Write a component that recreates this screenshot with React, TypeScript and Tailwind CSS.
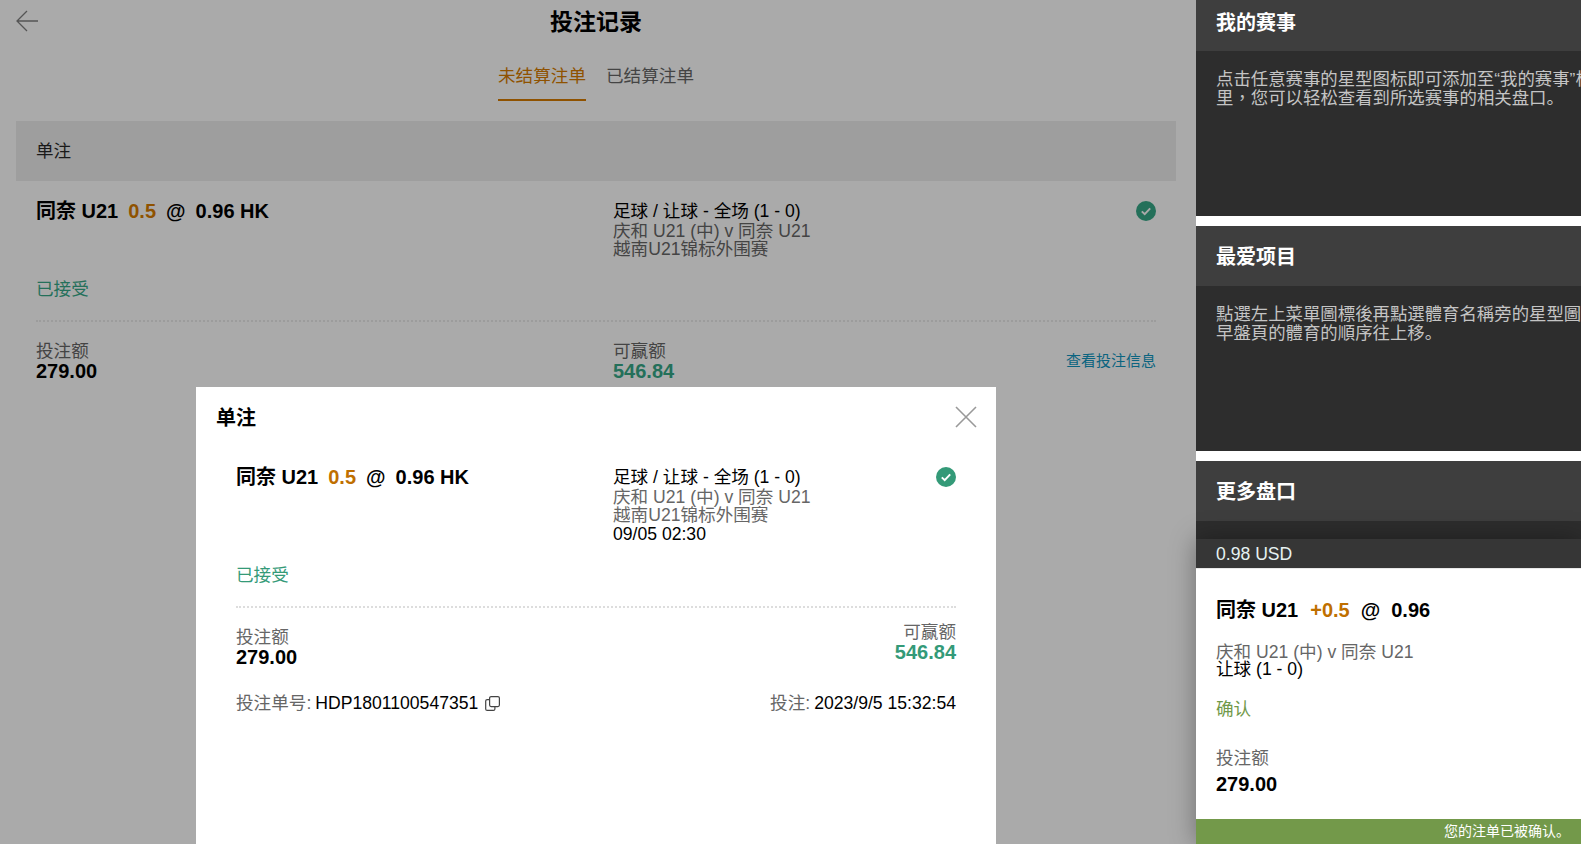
import React from 'react';

const CheckBadge = ({ color }: { color: string }) => (
  <svg width="20" height="20" viewBox="0 0 20 20" className="shrink-0">
    <circle cx="10" cy="10" r="10" fill={color} />
    <path d="M5.8 10.4l2.9 2.8 5.5-5.8" fill="none" stroke={color === '#349a78' ? '#ffffff' : '#a9a9a9'} strokeWidth="2" />
  </svg>
);

const BetTitle = ({ name, line, price, orange, wide }: { name: string; line: string; price: string; orange: string; wide?: boolean }) => (
  <div className={wide ? 'flex gap-[11px] text-[20px] leading-[20px] font-bold text-black whitespace-nowrap' : 'flex gap-[10px] text-[20px] leading-[20px] font-bold text-black whitespace-nowrap'}>
    <span className={wide ? 'mr-px' : ''}>{name}</span>
    <span style={{ color: orange }}>{line}</span>
    <span>@</span>
    <span>{price}</span>
  </div>
);

const Market = ({ main, sub }: { main: string; sub: string }) => (
  <div className="text-[17.6px] leading-[18px]">
    <div className="text-black leading-[20px] mb-px">足球 / 让球 - 全场 (1 - 0)</div>
    <div style={{ color: main }}>庆和 U21 (中) v 同奈 U21</div>
    <div style={{ color: main }}>越南U21锦标外围赛</div>
    {sub && <div className="text-black leading-[20px]">{sub}</div>}
  </div>
);

export default function App() {
  return (
    <div className="relative flex h-[844px] w-[1581px] overflow-hidden bg-white font-['Liberation_Sans','Noto_Sans_CJK_SC',sans-serif]">
      {/* Dimmed bet history */}
      <div className="w-[1196px] shrink-0 bg-[#aaaaaa] px-4">
        <div className="relative h-[42px] w-[1160px] text-center text-[23px] leading-[44px] font-bold text-black">
          <svg width="24" height="24" viewBox="0 0 24 24" className="absolute left-0 top-[9px]" fill="none" stroke="#555555" strokeWidth="1.3">
            <path d="M22 12H1M11 2L1 12l10 10" />
          </svg>
          投注记录
        </div>
        <div className="mt-2 flex w-[1160px] justify-center gap-5 text-[17.6px] leading-[52px]">
          <div className="h-[51px] border-b-2 border-[#8f5200] text-[#8f5200]">未结算注单</div>
          <div className="h-[51px] text-[#444444]">已结算注单</div>
        </div>
        <div className="mt-5 h-[60px] w-[1160px] bg-[#9e9e9e] pl-5 text-[17.6px] leading-[60px] text-[#1a1a1a]">单注</div>
        <div className="w-[1160px] px-5 pt-5">
          <div className="flex h-[77px]">
            <div className="w-[577px] shrink-0">
              <BetTitle name="同奈 U21" line="0.5" price="0.96 HK" orange="#8f5200" />
            </div>
            <div className="flex-1">
              <Market main="#444444" sub="" />
            </div>
            <CheckBadge color="#24705a" />
          </div>
          <div className="text-[17.6px] leading-[22px] text-[#24705a]">已接受</div>
          <div className="mt-[20px] border-t-2 border-dotted border-[#9c9c9c]" />
          <div className="flex pt-[19px]">
            <div className="w-[577px] shrink-0">
              <div className="text-[17.6px] leading-[20px] text-[#444444]">投注额</div>
              <div className="text-[20px] leading-[20px] font-bold text-black">279.00</div>
            </div>
            <div className="flex-1">
              <div className="text-[17.6px] leading-[20px] text-[#444444]">可赢额</div>
              <div className="text-[20px] leading-[20px] font-bold text-[#24705a]">546.84</div>
            </div>
            <div className="mt-[10px] text-[15px] leading-[20px] text-[#0b6480]">查看投注信息</div>
          </div>
        </div>
      </div>

      {/* Bet detail modal */}
      <div className="absolute bottom-0 left-[196px] top-[387px] w-[800px] bg-white">
        <div className="relative h-[60px] pl-5 text-[20px] leading-[62px] font-bold text-black">
          单注
          <svg width="22" height="22" viewBox="0 0 22 22" className="absolute right-[19px] top-[19px]" stroke="#999999" strokeWidth="1.6">
            <path d="M1 1l20 20M21 1L1 21" />
          </svg>
        </div>
        <div className="px-10 pt-5">
          <div className="flex h-[97px]">
            <div className="w-[377px] shrink-0">
              <BetTitle name="同奈 U21" line="0.5" price="0.96 HK" orange="#bf6f00" />
            </div>
            <div className="flex-1">
              <Market main="#666666" sub="09/05 02:30" />
            </div>
            <CheckBadge color="#349a78" />
          </div>
          <div className="text-[17.6px] leading-[22px] text-[#349a78]">已接受</div>
          <div className="mt-[20px] border-t-2 border-dotted border-[#dddddd]" />
          <div className="flex items-start justify-between">
            <div className="pt-[19px]">
              <div className="text-[17.6px] leading-[20px] text-[#666666]">投注额</div>
              <div className="text-[20px] leading-[20px] font-bold text-black">279.00</div>
            </div>
            <div className="pt-[14px] text-right">
              <div className="text-[17.6px] leading-[20px] text-[#666666]">可赢额</div>
              <div className="text-[20px] leading-[20px] font-bold text-[#349a78]">546.84</div>
            </div>
          </div>
          <div className="mt-[26px] flex justify-between text-[17.6px] leading-[20px] text-black">
            <div className="flex items-center">
              <span className="text-[#666666]">投注单号:</span>
              <span className="ml-1">HDP1801100547351</span>
              <svg width="15" height="16" viewBox="0 0 15 16" fill="none" stroke="#444444" strokeWidth="1.2" className="ml-[7px]">
                <rect x="4.6" y="1.6" width="9.8" height="10" rx="1.5" />
                <path d="M4.6 4.6H2.2A1.5 1.5 0 0 0 .7 6.1v7.8a1.5 1.5 0 0 0 1.5 1.5h6.2a1.5 1.5 0 0 0 1.5-1.5v-2.2" />
              </svg>
            </div>
            <div>
              <span className="text-[#666666]">投注:</span>
              <span className="ml-1">2023/9/5 15:32:54</span>
            </div>
          </div>
        </div>
      </div>

      {/* Right column */}
      <div className="w-[385px] shrink-0 overflow-hidden bg-white">
        <div className="mb-[10px]">
          <div className="h-[51px] bg-[#3e3e3e] pl-5 text-[20px] leading-[46px] font-bold text-white">我的赛事</div>
          <div className="h-[165px] bg-[#2d2d2d] pl-5 pt-[19px] text-[17.4px] leading-[18px] text-[#c4c4c4] whitespace-nowrap">
            <div className="h-[18px]">点击任意赛事的星型图标即可添加至“我的赛事”栏目</div>
            <div className="h-[18px]">里<span lang="zh-Hant" className="font-['Noto_Sans_CJK_TC']">，</span>您可以轻松查看到所选赛事的相关盘口。</div>
          </div>
        </div>
        <div className="mb-[10px]">
          <div className="h-[60px] bg-[#3e3e3e] pl-5 text-[20px] leading-[62px] font-bold text-white">最爱项目</div>
          <div className="h-[165px] bg-[#2d2d2d] pl-5 pt-[19px] text-[17.4px] leading-[19px] text-[#c4c4c4] whitespace-nowrap">
            <div>點選左上菜單圖標後再點選體育名稱旁的星型圖標</div>
            <div>早盤頁的體育的順序往上移。</div>
          </div>
        </div>
        <div className="h-[60px] bg-[#3e3e3e] pl-5 text-[20px] leading-[62px] font-bold text-white">更多盘口</div>
        <div className="h-[40px] bg-[#2d2d2d]" />
      </div>

      {/* Bet confirmation popup */}
      <div className="absolute bottom-0 right-0 top-[539px] flex w-[385px] flex-col bg-white shadow-[0_0_24px_rgba(0,0,0,0.35)]">
        <div className="h-[30px] border-b border-[#e8e8e8] bg-[#363636] pl-5 text-[17.6px] leading-[31px] text-[#e6f2f2]">0.98 USD</div>
        <div className="flex-1 pl-5 pt-[31px]">
          <BetTitle name="同奈 U21" line="+0.5" price="0.96" orange="#bf6f00" wide />
          <div className="mt-[23px] text-[17.6px] leading-[18px] text-[#666666]">庆和 U21 (中) v 同奈 U21</div>
          <div className="-mt-px text-[17.6px] leading-[18px] text-black">让球 (1 - 0)</div>
          <div className="mt-[21px] text-[17.6px] leading-[20px] text-[#71994a]">确认</div>
          <div className="mt-[29px] text-[17.6px] leading-[20px] text-[#666666]">投注额</div>
          <div className="mt-[6px] text-[20px] leading-[20px] font-bold text-black">279.00</div>
        </div>
        <div className="h-[25px] bg-[#73994a] pr-[11px] text-right text-[14px] leading-[25px] text-white">您的注单已被确认。</div>
      </div>
    </div>
  );
}
